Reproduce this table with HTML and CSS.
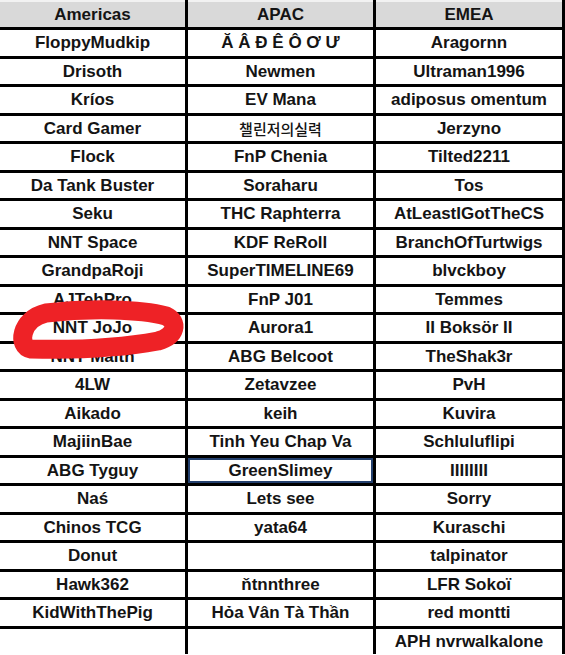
FILE: index.html
```html
<!DOCTYPE html>
<html>
<head>
<meta charset="utf-8">
<link rel="stylesheet" href="styles.css">
</head>
<body>
<div class="wrap">
  <div class="sheet">
    <div class="cell head">Americas</div><div class="cell head">APAC</div><div class="cell head">EMEA</div>
    <div class="cell">FloppyMudkip</div><div class="cell">Ă Â Đ Ê Ô Ơ Ư</div><div class="cell">Aragornn</div>
    <div class="cell">Drisoth</div><div class="cell">Newmen</div><div class="cell">Ultraman1996</div>
    <div class="cell">Kríos</div><div class="cell">EV Mana</div><div class="cell">adiposus omentum</div>
    <div class="cell">Card Gamer</div><div class="cell ko">챌린저의실력</div><div class="cell">Jerzyno</div>
    <div class="cell">Flock</div><div class="cell">FnP Chenia</div><div class="cell">Tilted2211</div>
    <div class="cell">Da Tank Buster</div><div class="cell">Soraharu</div><div class="cell">Tos</div>
    <div class="cell">Seku</div><div class="cell">THC Raphterra</div><div class="cell">AtLeastIGotTheCS</div>
    <div class="cell">NNT Space</div><div class="cell">KDF ReRoll</div><div class="cell">BranchOfTurtwigs</div>
    <div class="cell">GrandpaRoji</div><div class="cell">SuperTIMELINE69</div><div class="cell">blvckboy</div>
    <div class="cell">AJTehPro</div><div class="cell">FnP J01</div><div class="cell">Temmes</div>
    <div class="cell">NNT JoJo</div><div class="cell">Aurora1</div><div class="cell">II Boksör II</div>
    <div class="cell">NNT Maith</div><div class="cell">ABG Belcoot</div><div class="cell">TheShak3r</div>
    <div class="cell">4LW</div><div class="cell">Zetavzee</div><div class="cell">PvH</div>
    <div class="cell">Aikado</div><div class="cell">keih</div><div class="cell">Kuvira</div>
    <div class="cell">MajiinBae</div><div class="cell">Tinh Yeu Chap Va</div><div class="cell">Schluluflipi</div>
    <div class="cell">ABG Tyguy</div><div class="cell selected">GreenSlimey</div><div class="cell">IIIIIIII</div>
    <div class="cell">Naś</div><div class="cell">Lets see</div><div class="cell">Sorry</div>
    <div class="cell">Chinos TCG</div><div class="cell">yata64</div><div class="cell">Kuraschi</div>
    <div class="cell">Donut</div><div class="cell"></div><div class="cell">talpinator</div>
    <div class="cell">Hawk362</div><div class="cell">ňtnnthree</div><div class="cell">LFR Sokoï</div>
    <div class="cell">KidWithThePig</div><div class="cell">Hỏa Vân Tà Thần</div><div class="cell">red montti</div>
    <div class="cell"></div><div class="cell"></div><div class="cell">APH nvrwalkalone</div>
  </div>
  <svg class="marker" width="200" height="70" viewBox="0 295 200 70">
    <path d="M46 313 C 90 308, 140 309, 166 316 C 179 322, 176 336, 158 341 C 120 348, 70 350, 31 349 C 17 347, 20 319, 46 313 Z" fill="none" stroke="#ee2226" stroke-width="19" stroke-linejoin="round"/>
  </svg>
</div>
</body>
</html>
```
FILE: styles.css
```css
html, body {
  margin: 0;
  padding: 0;
  background: #fff;
}
.wrap {
  position: relative;
  width: 565px;
  height: 655px;
  overflow: hidden;
}
.sheet {
  display: grid;
  grid-template-columns: 185px 185px 186px;
  grid-template-rows: 27px;
  grid-auto-rows: 25.5px;
  gap: 3px;
  padding-right: 3px;
  background: #000;
  width: 562px;
}
.cell {
  background: #fff;
  display: flex;
  align-items: center;
  justify-content: center;
  padding-top: 1px;
  font-family: "Liberation Sans", Arial, sans-serif;
  font-weight: bold;
  font-size: 17px;
  color: #141414;
  white-space: nowrap;
}
.head {
  padding-top: 3px;
  background: linear-gradient(#f2f2f2 0 2px, #d9d9d9 2px);
}
.ko {
  font-family: "Noto Sans CJK KR", "Liberation Sans", sans-serif;
  font-weight: 500;
  font-size: 15px;
}
.selected {
  box-shadow: inset 0 0 0 2px #24406e;
}
.marker {
  position: absolute;
  left: 0;
  top: 295px;
}
```
